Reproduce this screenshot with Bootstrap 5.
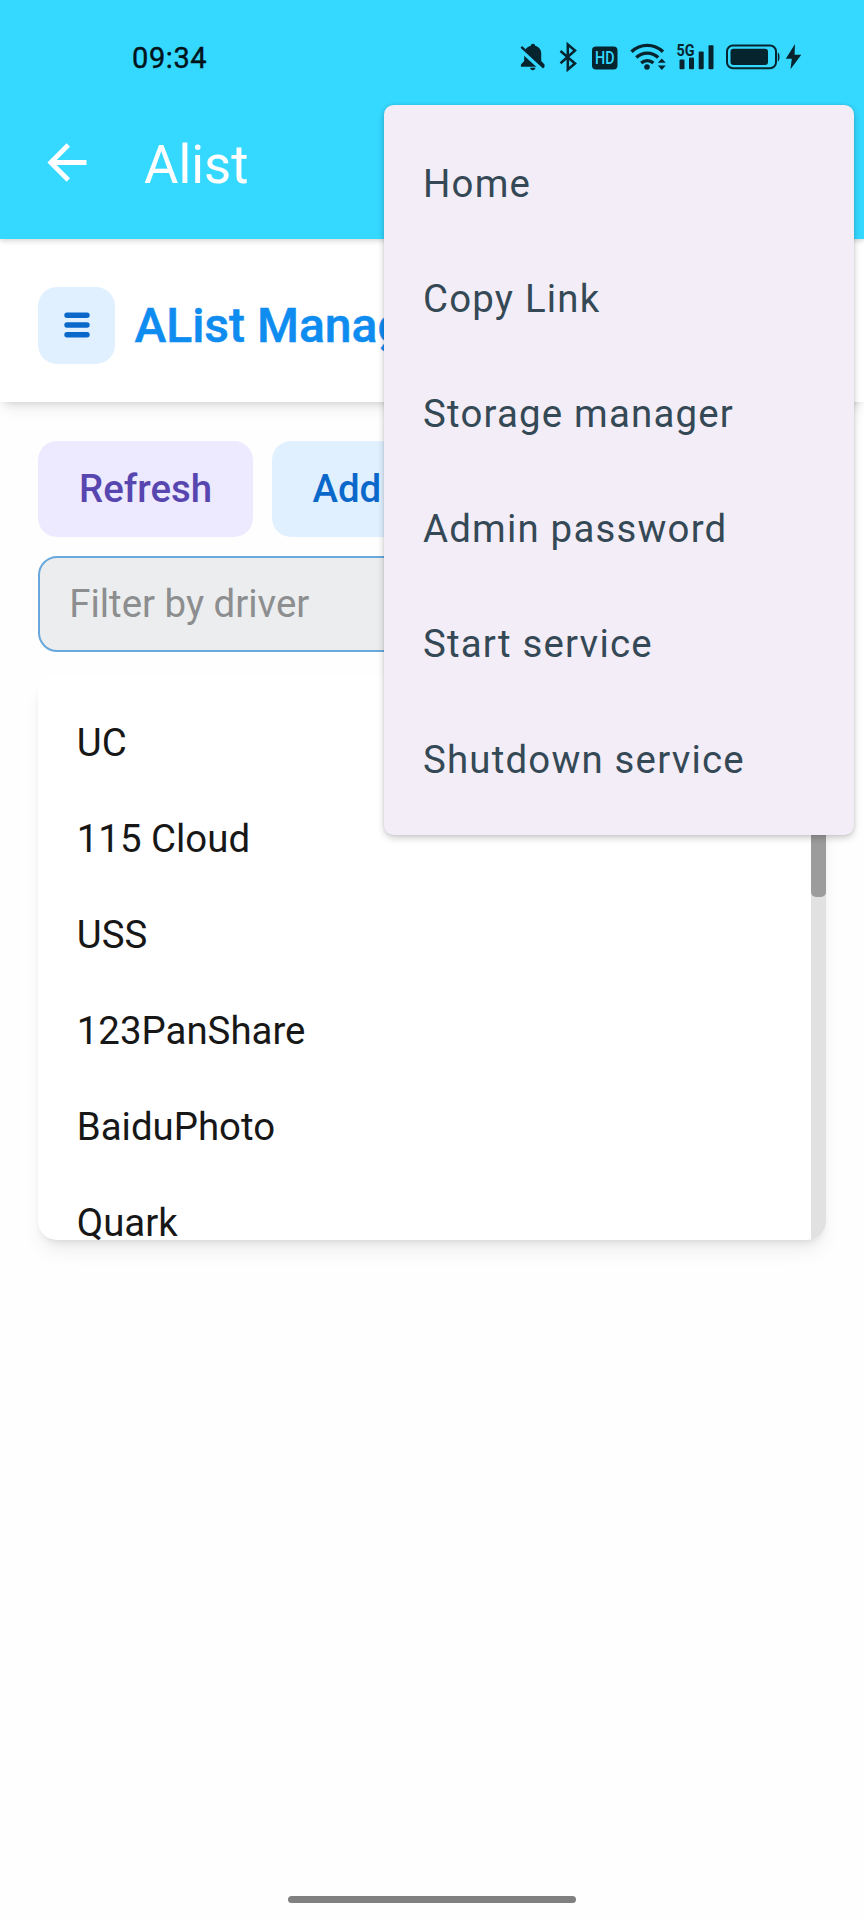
<!DOCTYPE html>
<html lang="en">
<head>
<meta charset="utf-8">
<meta name="viewport" content="width=device-width, initial-scale=1">
<title>Alist</title>
<link href="https://cdn.jsdelivr.net/npm/bootstrap@5.3.0/dist/css/bootstrap.min.css" rel="stylesheet">
<style>
  body { font-family: Roboto, sans-serif; font-size: 38.4px; line-height: 57.6px; color: #171717; background: #fefefe; height: 1920px; overflow: hidden; }
  .app-top { background: #35d8ff; height: 239px; box-shadow: 0 2px 5px rgba(0,0,0,.16); z-index: 2; }
  .status { height: 86px; padding: 28px 62px 0 132px; color: #06242e; }
  .clock { font-size: 29px; line-height: 58px; font-weight: 400; letter-spacing: .6px; color: #00131a; -webkit-text-stroke: .4px #00131a; padding-top: 1px; }
  .app-title { font-size: 52.8px; line-height: 64px; color: #fff; margin: 45px 0 0 56px; }
  .app-row { height: 153px; padding: 2px 0 0 46px; }
  .back-icon { margin-top: 55px; }
  .manage-bar { height: 163px; padding: 10px 38.4px 0; background: #fff; box-shadow: 0 9.6px 14.4px -4px rgba(0,0,0,.08), 0 4px 8px -4px rgba(0,0,0,.16); gap: 19.2px; }
  .menu-btn { width: 76.8px; height: 76.8px; border-radius: 19.2px; background: #e1f0ff; border: 0; }
  .manage-title { font-size: 48px; font-weight: 500; color: #0f8cf0; -webkit-text-stroke: .5px #0f8cf0; }
  .page { padding: 39px 38.4px 0; }
  .actions { gap: 19.2px; margin-bottom: 18.8px; }
  .pill { height: 96px; border-radius: 19.2px; font-size: 38.4px; font-weight: 500; padding: 0 40.6px; border: 0; }
  .pill-refresh { background: #ede9fe; color: #5746af; }
  .pill-add { background: #e1f0ff; color: #0b68cb; }
  .filter { height: 96px; border: 2.4px solid #68a8dc; border-radius: 19.2px; background: #ecedee; padding: 0 28.8px; font-size: 38.4px; }
  .filter::placeholder { color: #8c8e8f; opacity: 1; }
  .drivers { height: 566px; margin-top: 22px; border-radius: 19.2px; background: #fff; overflow: hidden; box-shadow: 0 14px 20px -4px rgba(0,0,0,.07), 0 5px 9px -4px rgba(0,0,0,.12); }
  .drivers ul { padding: 21.2px 38.4px 0; }
  .drivers li { height: 96px; line-height: 96px; }
  .track { width: 14.6px; background: #e1e1e1; padding-top: 109px; }
  .thumb { height: 114px; background: #9c9c9c; border-radius: 5px; }
  .popup { position: absolute; left: 384px; top: 105.4px; width: 470.4px; padding: 20.2px 0 18.2px; border-radius: 9.6px; background: #f3edf7; box-shadow: 0 3px 7px rgba(0,0,0,.2), 0 0 3px rgba(0,0,0,.1); z-index: 5; }
  .popup a { display: block; height: 115.2px; line-height: 115.2px; padding-left: 39px; color: #344955; letter-spacing: 1.2px; text-decoration: none; }
  .home-bar { position: absolute; left: 288px; bottom: 17px; width: 288px; height: 7px; border-radius: 4px; background: #808080; }
</style>
</head>
<body class="position-relative">
<header class="app-top position-relative">
  <div class="status d-flex justify-content-between align-items-center">
    <span class="clock">09:34</span>
    <svg width="284" height="32" viewBox="518 41.500 284 32" fill="#06242e">
      <!-- muted bell -->
      <path d="M533 44.2c1.2 0 2.2.8 2.2 2 4 1.1 6 4 6 8v7.2l3.3 3.6v2.2h-23.600v-2.200l3.300-3.600v-7.200c0-4 2.600-6.900 6.600-8 0-1.200 1-2 2.200-2zM530 68.300h5.500c-.3 1.500-1.200 2.400-2.700 2.400s-2.500-.9-2.800-2.400z"/>
      <path d="M519.500 49.200l23.500 21.500" stroke="#35d8ff" stroke-width="4"/>
      <path d="M521.300 47.400l22.500 20.800" stroke="#06242e" stroke-width="2.300"/>
      <!-- bluetooth -->
      <path d="M560.500 51.500l14.500 12.500-7.200 6V45l7.200 6-14.500 12.800" fill="none" stroke="#06242e" stroke-width="2.500"/>
      <!-- HD -->
      <rect x="592" y="47" width="25.500" height="23" rx="4"/>
      <text x="604.800" y="64.800" text-anchor="middle" font-family="Roboto" font-size="18" font-weight="500" textLength="19.500" lengthAdjust="spacingAndGlyphs" fill="#35d8ff">HD</text>
      <!-- wifi -->
      <g fill="none" stroke="#06242e" stroke-width="3.400">
        <path d="M631.500 52.300c9-8.600 22.500-8.600 31.500 0"/>
        <path d="M636.300 58.100c6.400-6 15.500-6 21.900 0"/>
        <path d="M641.200 63.600c3.700-3.300 8.500-3.300 12.200 0"/>
      </g>
      <circle cx="647" cy="67.500" r="2.800"/>
      <path d="M657.800 63.200l4-4.200 4 4.200zM657.800 66h8l-4 4.400z"/>
      <!-- mobile signal -->
      <text x="676.500" y="56" font-family="Roboto" font-size="16.500" font-weight="700" textLength="18" lengthAdjust="spacingAndGlyphs">5G</text>
      <rect x="679.500" y="60" width="5" height="9.700" rx="1"/><rect x="689" y="58" width="5" height="11.700" rx="1"/><rect x="698.700" y="52" width="5" height="17.700" rx="1"/><rect x="708.500" y="45.700" width="5" height="24" rx="1"/>
      <!-- battery -->
      <rect x="727" y="46" width="49" height="22.800" rx="6" fill="none" stroke="#06242e" stroke-width="2"/>
      <rect x="730.500" y="49.300" width="37.500" height="16.300" rx="3"/>
      <path d="M777.800 53c2.300.7 2.300 8.300 0 9z"/>
      <path d="M795 44.500l-9.200 14.700h6l-1.300 10.600 10.800-14.600h-6.700z"/>
    </svg>
  </div>
  <div class="app-row d-flex align-items-start">
    <svg class="back-icon flex-shrink-0" width="42" height="40" viewBox="0 0 42 40" fill="none" stroke="#fff" stroke-width="4.800"><path d="M40.500 19.500H5M22.300 2L4.800 19.500 22.300 37"/></svg>
    <span class="app-title">Alist</span>
  </div>
</header>
<div class="manage-bar d-flex align-items-center position-relative">
  <button class="menu-btn d-flex align-items-center justify-content-center p-0 flex-shrink-0" aria-label="Menu">
    <svg width="26" height="26" viewBox="0 0 26 26" stroke="#0b68cb" stroke-width="5.400" stroke-linecap="round"><path d="M3 3.200h20M3 13h20M3 22.800h20"/></svg>
  </button>
  <span class="manage-title text-nowrap">AList Manage</span>
</div>
<main class="page">
  <div class="actions d-flex">
    <button class="btn pill pill-refresh">Refresh</button>
    <button class="btn pill pill-add">Add</button>
  </div>
  <input class="form-control filter" placeholder="Filter by driver">
  <div class="drivers d-flex">
    <ul class="list-unstyled flex-grow-1 mb-0">
      <li>UC</li><li>115 Cloud</li><li>USS</li><li>123PanShare</li><li>BaiduPhoto</li><li>Quark</li>
    </ul>
    <div class="track flex-shrink-0"><div class="thumb"></div></div>
  </div>
</main>
<nav class="popup">
  <a href="#">Home</a><a href="#">Copy Link</a><a href="#">Storage manager</a><a href="#">Admin password</a><a href="#">Start service</a><a href="#">Shutdown service</a>
</nav>
<div class="home-bar"></div>
<script src="https://cdn.jsdelivr.net/npm/bootstrap@5.3.0/dist/js/bootstrap.bundle.min.js"></script>
</body>
</html>
